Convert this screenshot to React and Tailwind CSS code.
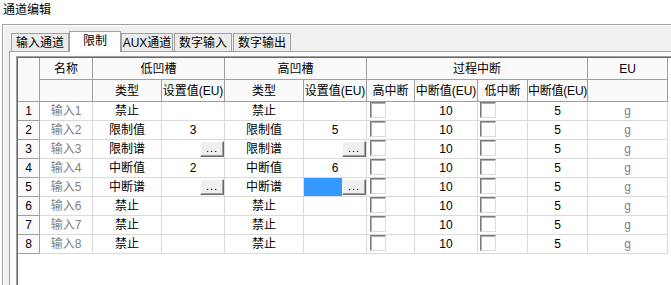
const COLS = 'grid grid-cols-[22px_53px_69px_63px_79px_63px_48px_63px_50px_60px_80px] grid-rows-[22px_22px_repeat(8,19px)]'

const rows = [
  { name: '输入1', t1: '禁止', v1: '', t2: '禁止', v2: '' },
  { name: '输入2', t1: '限制值', v1: '3', t2: '限制值', v2: '5' },
  { name: '输入3', t1: '限制谱', v1: 'btn', t2: '限制谱', v2: 'btn' },
  { name: '输入4', t1: '中断值', v1: '2', t2: '中断值', v2: '6' },
  { name: '输入5', t1: '中断谱', v1: 'btn', t2: '中断谱', v2: 'sel' },
  { name: '输入6', t1: '禁止', v1: '', t2: '禁止', v2: '' },
  { name: '输入7', t1: '禁止', v1: '', t2: '禁止', v2: '' },
  { name: '输入8', t1: '禁止', v1: '', t2: '禁止', v2: '' },
]

const hd = 'flex items-center justify-center whitespace-nowrap border-r border-b border-[#a0a0a0] bg-[#fafafa]'
const cell = 'flex items-center justify-center whitespace-nowrap border-r border-b border-[#dadada]'

function Dots() {
  return (
    <div className="w-[24px] h-[16px] flex items-end justify-center pb-[2px] bg-[#efefef] border border-t-white border-l-white border-r-[#696969] border-b-[#696969] shadow-[inset_-1px_-1px_0_#a0a0a0] text-[11px] leading-none tracking-[1px]">
      ...
    </div>
  )
}

function Check() {
  return (
    <div className="w-[16px] h-[16px] bg-white border border-t-[#7a7a7a] border-l-[#7a7a7a] border-r-[#dcdcdc] border-b-[#dcdcdc] shadow-[inset_1px_1px_0_#b0b0b0]" />
  )
}

function Value({ v }) {
  if (v === 'btn') {
    return <div className="flex items-center justify-end border-r border-b border-[#dadada]"><Dots /></div>
  }
  if (v === 'sel') {
    return (
      <div className="flex items-center border-r border-b border-[#dadada]">
        <div className="flex-1 h-full bg-[#3399ff]" />
        <Dots />
      </div>
    )
  }
  return <div className={cell}>{v}</div>
}

const tabs = [
  { label: '输入通道', w: 'w-[58px]', ml: 'ml-0' },
  { label: '限制', w: 'w-[52px]', ml: 'ml-0', active: true },
  { label: 'AUX通道', w: 'w-[52px]', ml: 'ml-0' },
  { label: '数字输入', w: 'w-[58px]', ml: 'ml-[1px]' },
  { label: '数字输出', w: 'w-[58px]', ml: 'ml-[1px]' },
]

export default function App() {
  return (
    <div className="w-[671px] h-[285px] overflow-hidden bg-white text-[12px] leading-none text-black font-['Liberation_Sans','Noto_Sans_CJK_SC',sans-serif]">
      <div className="h-[24px] pl-[3px] pt-[3px] leading-[14px]">通道编辑</div>

      <div className="ml-[2px] h-[261px] flex flex-col border-l border-t border-[#a0a0a0] bg-[#f0f0f0] shadow-[inset_1px_1px_0_#ffffff]">
        <div className="h-[26px] ml-[6px] pl-[2px] flex items-end">
          {tabs.map(t => t.active ? (
            <div key={t.label} className={`${t.w} ${t.ml} h-[21px] -mb-px relative z-10 flex justify-center pt-[3px] bg-white border border-b-0 border-[#a0a0a0]`}>
              {t.label}
            </div>
          ) : (
            <div key={t.label} className={`${t.w} ${t.ml} h-[18px] flex items-center justify-center whitespace-nowrap bg-[#ececec] border border-b-0 border-[#a0a0a0]`}>
              {t.label}
            </div>
          ))}
        </div>

        <div className="ml-[6px] flex-1 flex flex-col border-l border-t border-[#a0a0a0] bg-[#fcfcfc] pl-[6px] pt-[4px]">
          <div className="flex-1 border-l border-t border-[#a0a0a0] bg-white">
            <div className="h-full border-l border-t border-[#696969]">
              <div className={COLS}>
                <div className={`${hd} row-span-2`} />
                <div className={hd}>名称</div>
                <div className={`${hd} col-span-2`}>低凹槽</div>
                <div className={`${hd} col-span-2`}>高凹槽</div>
                <div className={`${hd} col-span-4`}>过程中断</div>
                <div className={hd}>EU</div>

                <div className={hd} />
                <div className={hd}>类型</div>
                <div className={hd}>设置值(EU)</div>
                <div className={hd}>类型</div>
                <div className={hd}>设置值(EU)</div>
                <div className={hd}>高中断</div>
                <div className={hd}>中断值(EU)</div>
                <div className={hd}>低中断</div>
                <div className={`${hd} tracking-[-0.2px]`}>中断值(EU)</div>
                <div className={hd} />

                {rows.map((r, i) => (
                  <div key={i} className="contents">
                    <div className={hd}>{i + 1}</div>
                    <div className={`${cell} text-[#808080]`}>{r.name}</div>
                    <div className={cell}>{r.t1}</div>
                    <Value v={r.v1} />
                    <div className={cell}>{r.t2}</div>
                    <Value v={r.v2} />
                    <div className="flex items-start pl-[3px] border-r border-b border-[#dadada]"><Check /></div>
                    <div className={cell}>10</div>
                    <div className="flex items-start pl-[2px] border-r border-b border-[#dadada]"><Check /></div>
                    <div className={cell}>5</div>
                    <div className={`${cell} text-[#808080]`}>g</div>
                  </div>
                ))}
              </div>
            </div>
          </div>
        </div>
      </div>
    </div>
  )
}
